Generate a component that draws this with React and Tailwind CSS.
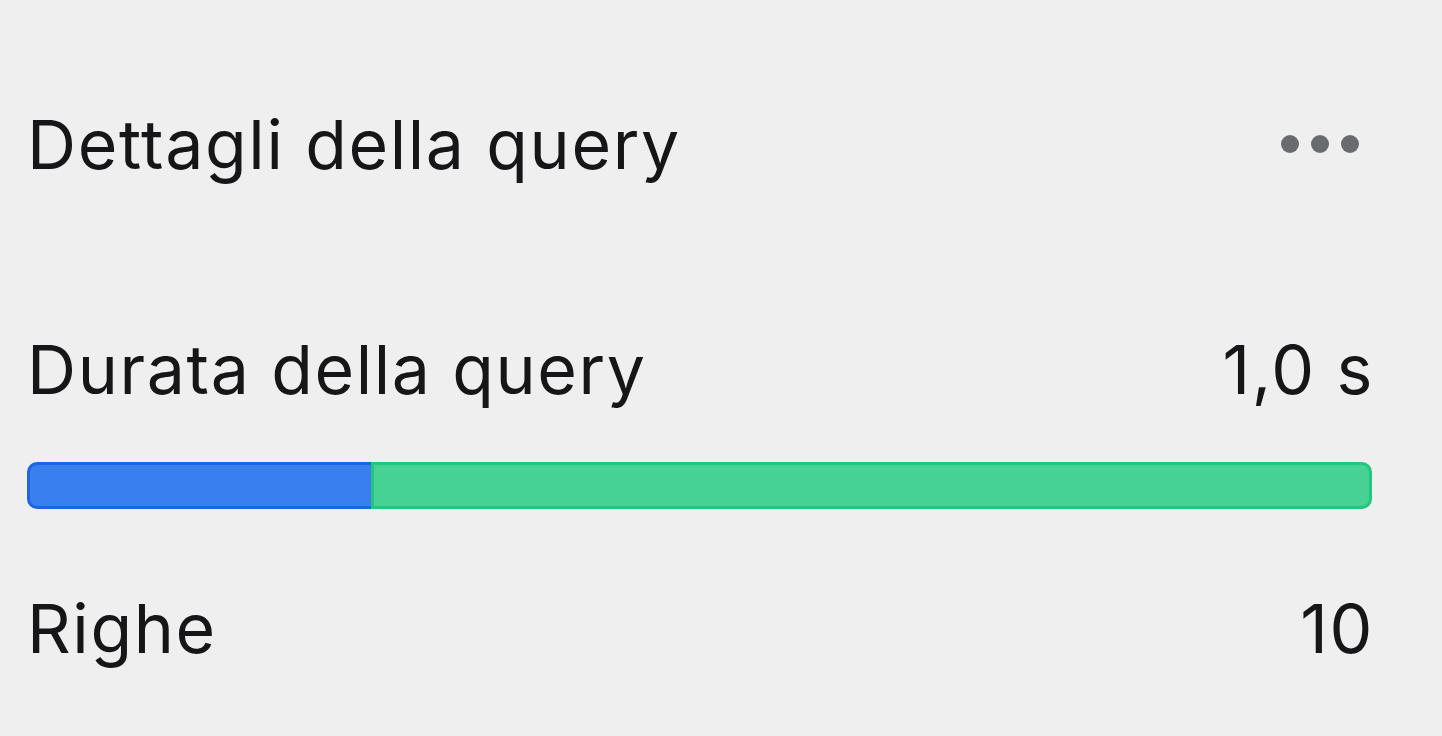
import React from "react";

export default function App() {
    const split = 25.6;

    return (
        <div className="min-h-screen w-full bg-[#efefef] text-[#161618]" style={{ fontFamily: "Inter, 'Noto Sans', sans-serif" }}>
            <div className="pl-[27px] pr-[68px] pt-[110px]">
                <div className="flex items-center justify-between">
                    <h2 className="text-[68px] leading-none font-normal tracking-[1.6px]">Dettagli della query</h2>
                    <div className="flex items-center gap-[12px] mr-[15px]">
                        <span className="w-[18px] h-[18px] rounded-full bg-[#686b70]" />
                        <span className="w-[18px] h-[18px] rounded-full bg-[#686b70]" />
                        <span className="w-[18px] h-[18px] rounded-full bg-[#686b70]" />
                    </div>
                </div>

                <div className="mt-[157px] flex items-center justify-between text-[68px] leading-none tracking-[1.6px]">
                    <span>Durata della query</span>
                    <span>1,0 s</span>
                </div>

                <div className="mt-[59px] mr-[2px] flex h-[47px]">
                    <div className="h-full rounded-l-[10px] border-[3px] border-r-0 border-[#1f64e3] bg-[#3a7fee]" style={{ width: `${split}%` }} />
                    <div className="h-full flex-1 rounded-r-[10px] border-[3px] border-[#22c77d] bg-[#46d195]" />
                </div>

                <div className="mt-[85px] flex items-center justify-between text-[68px] leading-none tracking-[1.6px]">
                    <span>Righe</span>
                    <span>10</span>
                </div>
            </div>
        </div>
    );
}
